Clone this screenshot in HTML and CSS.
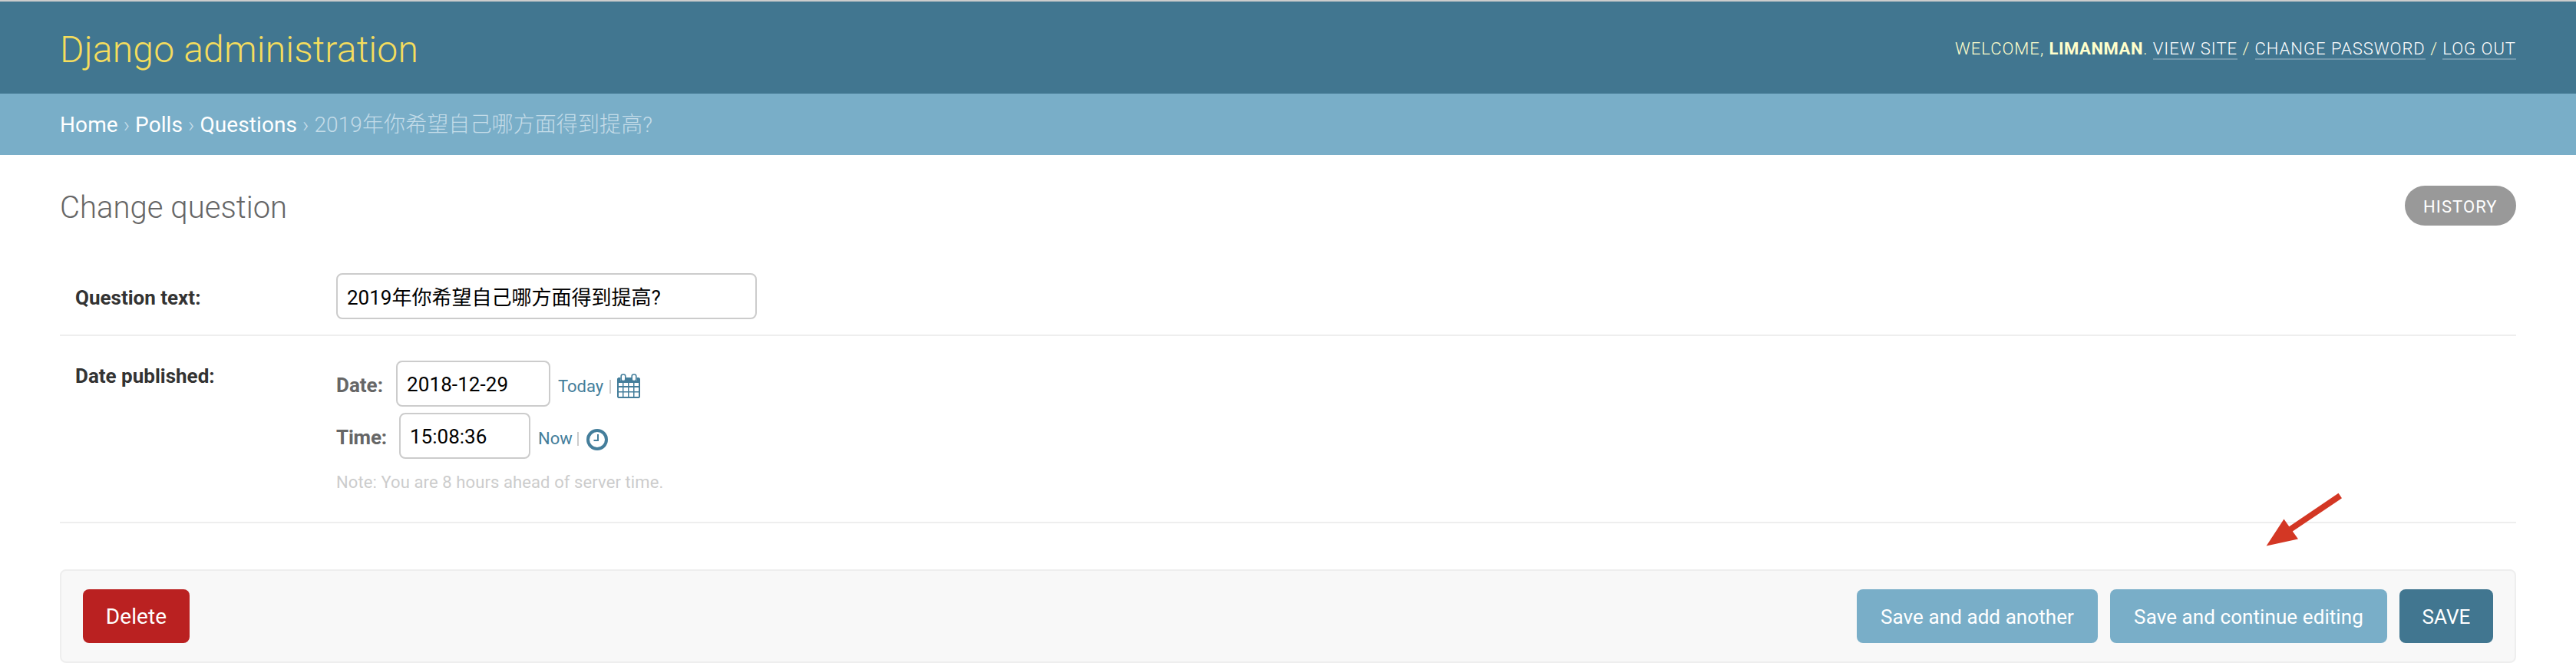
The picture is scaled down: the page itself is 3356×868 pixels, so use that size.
FILE: index.html
```html
<!DOCTYPE html>
<html lang="en">
<head>
<meta charset="utf-8">
<title>Change question | Django administration</title>
<link rel="stylesheet" href="styles.css">
</head>
<body>
<header class="header">
  <h1 class="site-name">Django administration</h1>
  <div class="user-tools">Welcome, <strong>limanman</strong>. <a>View site</a> / <a>Change password</a> / <a>Log out</a></div>
</header>
<nav class="breadcrumbs"><a>Home</a> › <a>Polls</a> › <a>Questions</a> › <span class="current">2019年你希望自己哪方面得到提高?</span></nav>
<main class="content">
  <div class="title-row">
    <h2 class="page-title">Change question</h2>
    <a class="history">History</a>
  </div>
  <section class="form-row question-row">
    <label class="label" for="question">Question text:</label>
    <input class="field question-field" id="question" type="text" value="2019年你希望自己哪方面得到提高?">
  </section>
  <section class="form-row date-row">
    <span class="label">Date published:</span>
    <div class="datetime">
      <div class="line">
        <label class="sub-label date-label" for="date">Date:</label>
        <input class="field date-field" id="date" type="text" value="2018-12-29">
        <a class="shortcut">Today</a><span class="bar bar-today"></span>
        <svg class="calendar" viewBox="0 0 30 32" width="30" height="32">
          <path fill="#447e9b" fill-rule="evenodd" d="M1.5 5H4.500V9H11V5H19V9H25.500V5H28.500L30 6.500V30.500L28.500 32H1.500L0 30.500V6.500ZM2 12V16H7V12ZM8.500 12V16H14V12ZM15.500 12V16H21V12ZM22.500 12V16H28V12ZM2 18V23H7V18ZM8.500 18V23H14V18ZM15.500 18V23H21V18ZM22.500 18V23H28V18ZM2 24.500V30H7V24.500ZM8.500 24.500V30H14V24.500ZM15.500 24.500V30H21V24.500ZM22.500 24.500V30H28V24.500Z"/>
          <rect x="5.200" y="1" width="5.600" height="8.500" rx="2.300" fill="#fff" stroke="#447e9b" stroke-width="1.600"/>
          <rect x="19.200" y="1" width="5.600" height="8.500" rx="2.300" fill="#fff" stroke="#447e9b" stroke-width="1.600"/>
        </svg>
      </div>
      <div class="line">
        <label class="sub-label time-label" for="time">Time:</label>
        <input class="field time-field" id="time" type="text" value="15:08:36">
        <a class="shortcut">Now</a><span class="bar bar-now"></span>
        <svg class="clock" viewBox="0 0 28 28" width="28" height="28">
          <circle cx="14" cy="14" r="12" fill="none" stroke="#447e9b" stroke-width="4"/>
          <path d="M15 7V15H9.500" fill="none" stroke="#447e9b" stroke-width="2"/>
        </svg>
      </div>
      <p class="note">Note: You are 8 hours ahead of server time.</p>
    </div>
  </section>
  <div class="submit-row">
    <a class="button delete">Delete</a>
    <button class="button another">Save and add another</button>
    <button class="button continue">Save and continue editing</button>
    <button class="button save">SAVE</button>
  </div>
</main>
<svg class="arrow" viewBox="0 0 130 90" width="130" height="90">
  <path fill="#d33724" d="M106.500 12.800L111 19.300L46.800 62.500L54 72.600L12.600 81.500L35.500 46.500L42.300 56.300Z"/>
</svg>
</body>
</html>
```

FILE: styles.css
```css
* { box-sizing: border-box; }
body {
  margin: 0;
  background: #fff;
  color: #333;
  font-family: Roboto, "Noto Sans CJK SC", sans-serif;
  font-size: 26px;
}
h1, h2, p { margin: 0; }
.header {
  display: flex;
  justify-content: space-between;
  align-items: center;
  height: 122px;
  padding: 0 78px;
  border-top: 2px solid #ccc;
  background: #417690;
  color: #ffc;
}
.site-name {
  padding-top: 5px;
  font-size: 48px;
  font-weight: 300;
  line-height: 58px;
  letter-spacing: .19px;
  color: #f5dd5d;
}
.user-tools {
  padding-top: 4px;
  font-size: 22px;
  font-weight: 300;
  line-height: 30px;
  letter-spacing: 1px;
  text-transform: uppercase;
}
.user-tools strong { font-weight: 700; letter-spacing: .6px; }
.user-tools a {
  border-bottom: 2px solid rgba(255, 255, 255, .25);
  color: #fff;
}
.breadcrumbs {
  height: 80px;
  padding: 2px 78px 0;
  background: #79aec8;
  color: #c4dce8;
  font-size: 28px;
  font-weight: 300;
  line-height: 78px;
  letter-spacing: .1px;
  white-space: nowrap;
}
.breadcrumbs a { color: #fff; font-weight: 400; }
.content { padding: 0 78px; }
.title-row {
  display: flex;
  justify-content: space-between;
  height: 134px;
  padding-top: 40px;
}
.page-title {
  margin-top: 5px;
  color: #666;
  font-size: 40px;
  font-weight: 300;
  line-height: 48px;
  letter-spacing: .04px;
}
.history {
  width: 145px;
  height: 52px;
  padding-left: 24px;
  border-radius: 26px;
  background: #999;
  color: #fff;
  font-size: 22px;
  line-height: 55px;
  letter-spacing: 1.1px;
  text-transform: uppercase;
}
.form-row {
  display: flex;
  align-items: flex-start;
  padding-left: 20px;
  border-bottom: 2px solid #eee;
}
.question-row { height: 102px; padding-top: 20px; }
.date-row { height: 244px; padding-top: 32px; }
.label {
  flex: 0 0 340px;
  padding-top: 16px;
  font-weight: 700;
  line-height: 32px;
}
.date-row .label { padding-top: 4px; }
.field {
  height: 60px;
  margin: 0;
  padding: 0 12px;
  border: 2px solid #ccc;
  border-radius: 8px;
  background: #fff;
  color: #000;
  font: 400 26px Roboto, "Noto Sans CJK SC", sans-serif;
}
.question-field { width: 548px; padding-bottom: 2px; }
.date-field, .time-field { padding-top: 1px; }
.line { display: flex; align-items: flex-start; height: 68px; }
.sub-label {
  padding-top: 16px;
  color: #666;
  font-weight: 700;
  line-height: 32px;
}
.date-label { width: 78px; }
.date-field { width: 201px; letter-spacing: .1px; }
.time-label { width: 82px; letter-spacing: -.2px; }
.time-field { width: 171px; }
.shortcut {
  margin-left: 10px;
  padding-top: 18px;
  color: #447e9b;
  font-size: 22px;
  line-height: 31px;
}
.bar { width: 2px; height: 18px; margin-top: 25px; background: #ccc; }
.bar-today { margin-left: 8px; }
.bar-now { margin-left: 6px; }
.calendar { margin: 17px 0 0 8px; }
.clock { margin: 21px 0 0 10px; }
.note {
  padding-top: 8px;
  color: #ccc;
  font-size: 22px;
  line-height: 30px;
  letter-spacing: .1px;
}
.submit-row {
  display: flex;
  align-items: center;
  gap: 16px;
  height: 122px;
  margin-top: 60px;
  padding: 0 28px;
  border: 2px solid #eee;
  border-radius: 8px;
  background: #f8f8f8;
}
.button {
  height: 70px;
  padding: 1px 0 0;
  border: 0;
  border-radius: 8px;
  background: #79aec8;
  color: #fff;
  font: 400 26px/70px Roboto, sans-serif;
  letter-spacing: .08px;
  text-align: center;
}
.delete { width: 139px; margin-right: auto; background: #ba2121; font-size: 28px; }
.another { width: 314px; }
.continue { width: 361px; }
.save { width: 122px; background: #417690; }
.arrow { position: absolute; left: 2940px; top: 630px; }
```
